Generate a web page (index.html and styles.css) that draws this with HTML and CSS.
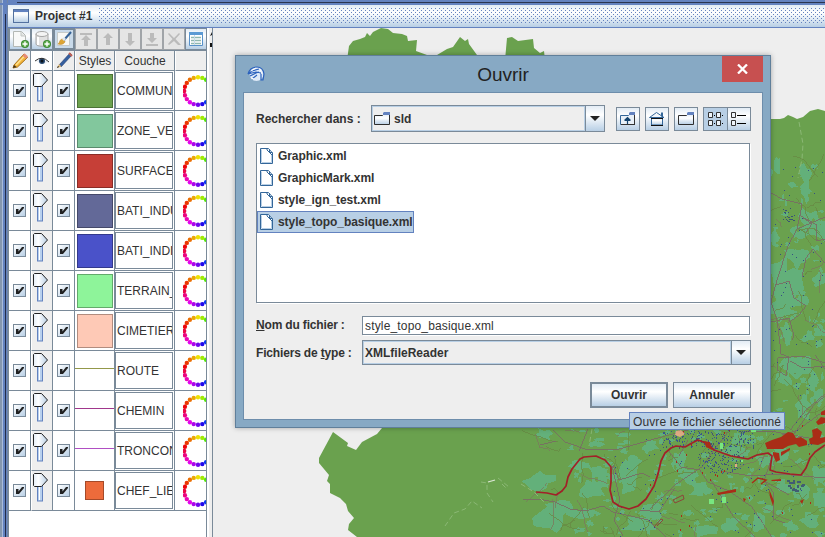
FILE: index.html
```html
<!DOCTYPE html>
<html lang="fr">
<head>
<meta charset="utf-8">
<title>Project #1</title>
<link rel="stylesheet" href="styles.css">
</head>
<body>
<svg class="defs" width="0" height="0" aria-hidden="true">
  <defs>
    <linearGradient id="steel" x1="0" y1="0" x2="0" y2="1"><stop offset="0" stop-color="#e3ecf5"/><stop offset=".35" stop-color="#fff"/><stop offset="1" stop-color="#b8cfe5"/></linearGradient>
    <linearGradient id="knobfill" x1="0" y1="0" x2="1" y2="0"><stop offset="0" stop-color="#e4edf6"/><stop offset=".35" stop-color="#fff"/><stop offset="1" stop-color="#b8cfe5"/></linearGradient>
    <pattern id="bumps" width="4" height="4" patternUnits="userSpaceOnUse"><path fill="#6382bf" d="M0 0h1v1H0zM2 2h1v1H2z"/></pattern>
    <symbol id="folder" viewBox="0 0 16 16">
      <path d="M.5 13.500v-9h8l1-1h6v10z" fill="url(#steel)" stroke="#2e2e2e"/>
      <path d="M9 2l1-1h6v3H9z" fill="#6382bf"/>
    </symbol>
    <symbol id="file" viewBox="0 0 14 16">
      <path d="M.5.5h8l4 4.500v10.500h-12z" fill="#fff" stroke="#336699"/>
      <path d="M1.500 14.500V1.500M2 14.500h9.500V6" fill="none" stroke="#b8cfe5"/>
      <path d="M7 1v1l5 5M9.500 1.500V4.500h3" fill="none" stroke="#336699"/>
    </symbol>
    <symbol id="plus" viewBox="0 0 8 8"><circle cx="4" cy="4" r="4" fill="#3c8a32"/><circle cx="4" cy="4" r="3" fill="#5fae4c"/><path d="M3.300 1.500h1.400v1.800h1.800v1.400H4.700v1.800H3.300V4.700H1.500V3.300h1.800z" fill="#fff"/></symbol>
  </defs>
</svg>
<div class="frame">
  <header class="titlebar">
    <svg class="winicon" width="16" height="14" viewBox="0 0 16 14"><rect x=".5" y=".5" width="15" height="13" fill="url(#steel)" stroke="#53719f"/><path d="M1 1h14v2H1z" fill="#6382bf"/></svg>
    <span>Project #1</span>
    <svg class="bumps" height="16"><rect width="100%" height="16" fill="url(#bumps)"/></svg>
  </header>
  <main class="work">
    <section class="layers">
      <div class="toolbar">
        <button class="tool"><svg width="20" height="20"><path d="M3.500 2.500h8l4 4v11h-12z" fill="#f8f9f8" stroke="#b3b8b5"/><path d="M11 3v4h4" fill="#e1e4e2" stroke="#c3c7c5"/><use href="#plus" x="11" y="11" width="8" height="8"/></svg></button>
        <button class="tool"><svg width="20" height="20"><path d="M4 5v10c0 3 12 3 12 0V5z" fill="#e1e1e1" stroke="#a6a6a6"/><ellipse cx="10" cy="5" rx="6" ry="2.500" fill="#f4f4f4" stroke="#a6a6a6"/><path d="M6 8v8" stroke="#fff" stroke-width="2"/><use href="#plus" x="11" y="11" width="8" height="8"/></svg></button>
        <button class="tool on"><svg width="20" height="20"><path d="M3.500 3.500h12v13h-12z" fill="#f8f8f5" stroke="#c7cbc9"/><path d="M4 15c2-1 1-5 5-5l2 2c0 3-4 4-7 3z" fill="#dda534" stroke="#b57d20" stroke-width=".5"/><path d="M10 11l7-8" stroke="#356296" stroke-width="2"/><path d="M9 11l2-2" stroke="#dfe7ed" stroke-width="3"/></svg></button>
        <button class="tool off"><svg width="20" height="20"><path d="M4 4h12v2H4zM10 6l5 5h-3v6H8v-6H5z"/></svg></button>
        <button class="tool off"><svg width="20" height="20"><path d="M10 4l5 5h-3v7H8V9H5z"/></svg></button>
        <button class="tool off"><svg width="20" height="20"><path d="M10 17l-5-5h3V4h4v8h3z"/></svg></button>
        <button class="tool off"><svg width="20" height="20"><path d="M10 14L5 9h3V4h4v5h3zM4 15h12v2H4z"/></svg></button>
        <button class="tool off"><svg width="20" height="20"><path d="M5 4l5 5 5-5 1 1-4.500 5L17 16h-3l-4-4-5 4-1-1 4.500-5L4 5z"/></svg></button>
        <button class="tool"><svg width="20" height="20"><path d="M3.500 3.500h13v13h-13z" fill="#fff" stroke="#5791c9"/><path d="M3 3h14v3H3z" fill="#5c9ad4"/><path d="M5 8.500h10M5 11.500h10M5 14.500h10" stroke="#90b7b0" stroke-width="1.500"/><path d="M8.500 6v10" stroke="#c5d9e9"/></svg></button>
      </div>
      <div class="row head">
        <div><svg width="21" height="19"><path d="M4 14L14 3l3.500 3.500L7.500 16 3 17z" fill="#f3b43a" stroke="#a87119"/><path d="M6 14l9-9.500" stroke="#ffe18c" stroke-width="1.500"/><path d="M13.500 3.500l3.500 3" stroke="#e68c75" stroke-width="3"/><path d="M3 17l1-3 2.500 2z" fill="#3c3122"/></svg></div>
        <div class="eye"><svg width="16" height="14"><path d="M2 7q6-5 12 1-6 4-11-.5" fill="#e9eef4"/><circle cx="8" cy="7" r="3" fill="#26476d"/><circle cx="8" cy="7" r="1.500" fill="#0b1118"/><path d="M1 7q7-6 14 1" fill="none" stroke="#333"/></svg></div>
        <div><svg width="21" height="19"><path d="M5 14L16 2l2 2L7 16z" fill="#3560a0" stroke="#263b6c" stroke-width=".6"/><path d="M15 2l3 3" stroke="#c06054" stroke-width="2"/><path d="M3 17l2-4 2.500 2.500z" fill="#ddba7b"/><path d="M3 17l1-2 1 1z"/></svg></div>
        <div>Styles</div><div>Couche</div><div></div>
      </div>
      <div id="rows"></div>
    </section>
    <div class="divider"><svg width="5" height="20"><path d="M5 4v3l-2 1zM3 15h2v4H3z" fill="#111"/></svg></div>
    <section class="mapview"><svg id="map" width="612" height="509" viewBox="213 28 612 509"></svg></section>
  </main>
</div>

<div class="dialog">
  <div class="dialog-title">
    <svg class="logo" width="18" height="16"><ellipse cx="9.500" cy="8" rx="7" ry="7" fill="#dfeaf8"/><path d="M1 8Q3 1 10 1q6 0 7 7l-1 6h-2V7L9 6 1 8l4-3 7-2M3 10l6-3 3-1M5 13l5-4" fill="none" stroke="#2c62bd" stroke-width="1.200"/><path d="M4 5l5-3M13 3l2 5M4 12l3 1" stroke="#fff"/></svg>
    <span>Ouvrir</span>
    <button class="close"><svg width="11" height="10"><path d="M1 .5l9 9M10 .5l-9 9" stroke="#fff" stroke-width="2.300"/></svg></button>
  </div>
  <div class="pane">
    <div class="lookin">
      <label>Rechercher dans :</label>
      <div class="combo"><div class="value"><svg width="16" height="16"><use href="#folder" width="16" height="16"/></svg>sld</div><button><svg width="10" height="5"><path d="M0 0h10L5 5z" fill="#222"/></svg></button></div>
      <div class="nav">
        <button><svg width="16" height="16"><path d="M.5 13.500v-9h8l1-1h5v10z" fill="#e8f0f8" stroke="#336699"/><path d="M9 2l1-1h5v3H9z" fill="#6382bf"/><path d="M1 13.500h14M14.500 4v10" stroke="#333"/><path d="M7.500 13V7M4.500 9.500L7.500 6.500l3 3M5 9.500h5" fill="none" stroke="#14446f" stroke-width="1.200"/></svg></button>
        <button><svg width="16" height="16"><path d="M2.500 7v7h11V7" fill="url(#steel)" stroke="#336699"/><path d="M.5 6.500l7-5 7.500 5z" fill="#f2f6fa" stroke="#336699"/><path d="M12 1.500h2v4h-2z" fill="#336699"/><path d="M2 7.500h12M2 14.500h12" stroke="#111"/></svg></button>
        <button><svg width="16" height="16"><use href="#folder" width="16" height="16"/></svg></button>
        <button class="pressed"><svg width="16" height="16"><path d="M.5 1.500h4v5h-4zM8.500 1.500h4v5h-4zM.5 9.500h4v5h-4zM8.500 9.500h4v5h-4z" fill="#eef4fa" stroke="#333"/><path d="M6 4h1v1H6zM14 4h1v1h-1zM6 12h1v1H6zM14 12h1v1h-1z"/></svg></button>
        <button class="joined"><svg width="16" height="16"><path d="M.5 1.500h4v5h-4zM.5 9.500h4v5h-4z" fill="#eef4fa" stroke="#333"/><path d="M6 4h9v1H6zM6 12h9v1H6z"/></svg></button>
      </div>
    </div>
    <ul class="files">
      <li><svg width="14" height="16"><use href="#file" width="14" height="16"/></svg>Graphic.xml</li>
      <li><svg width="14" height="16"><use href="#file" width="14" height="16"/></svg>GraphicMark.xml</li>
      <li><svg width="14" height="16"><use href="#file" width="14" height="16"/></svg>style_ign_test.xml</li>
      <li class="selected"><svg width="14" height="16"><use href="#file" width="14" height="16"/></svg>style_topo_basique.xml</li>
    </ul>
    <div class="form">
      <label><u>N</u>om du fichier :</label><div class="field">style_topo_basique.xml</div>
      <label>Fichiers de <u>t</u>ype :</label>
      <div class="combo"><div class="value">XMLfileReader</div><button><svg width="10" height="5"><path d="M0 0h10L5 5z" fill="#222"/></svg></button></div>
    </div>
    <div class="actions"><button class="default">Ouvrir</button><button>Annuler</button></div>
  </div>
</div>
<div class="tooltip">Ouvre le fichier sélectionné</div>
<script src="app.js"></script>
</body>
</html>
```
FILE: styles.css
```css
* { box-sizing: border-box; }
body { margin: 0; width: 825px; height: 537px; overflow: hidden; position: relative; background: #eee; color: #333; font: 12px "Liberation Sans", Arial, sans-serif; }
svg { display: block; flex: none; }
button { padding: 0; margin: 0; border: 1px solid #7a8a99; border-radius: 0; color: #333; font: bold 12px "Liberation Sans", Arial, sans-serif; background: linear-gradient(#e3ecf5, #fff 35%, #b8cfe5); display: flex; align-items: center; justify-content: center; }
.defs { position: absolute; }
.frame { height: 537px; padding: 5px 0 0 8px; background: linear-gradient(#6382bf, #6382bf) 0 3px / 100% 2px no-repeat, linear-gradient(#2a3550, #2a3550) 17px 2px / 100% 1px no-repeat, linear-gradient(#222c48, #222c48) 5px 14px / 1px 100% no-repeat, linear-gradient(90deg, #8496ae 0 2px, #a9bcdb 2px 3px, #6382bf 3px 7px, #7186a5 7px 8px, #6382bf 8px); }
.titlebar { height: 23px; display: flex; align-items: center; border-bottom: 1px solid #6382bf; background: linear-gradient(#e0eaf4, #fff 35%, #b8cfe5); font-weight: bold; }
.winicon { margin: 0 6px 0 5px; }
.titlebar span { width: 64px; white-space: nowrap; }
.bumps { flex: 1; min-width: 0; shape-rendering: crispEdges; }
.work { height: 509px; display: flex; }
.layers { width: 199px; height: 509px; background: #fff; border-left: 1px solid #7a8a99; border-right: 1px solid #7a8a99; overflow: hidden; }
.toolbar { display: flex; height: 22px; background: #eee; }
.tool { width: 22px; height: 22px; flex: none; }
.tool.on { background: #c9daea; border-width: 2px; }
.tool.off { background: #e5e5e5; border-color: #a0a4a8; }
.tool.off path { fill: #bbb; }
.row { display: grid; grid-template-columns: 22px 22px 22px 40px 60px 31px; height: 40px; }
.row > div { border-right: 1px solid #7a8a99; border-bottom: 1px solid #7a8a99; display: flex; align-items: center; justify-content: center; min-width: 0; overflow: hidden; }
.row > div:last-child { border-right: 0; }
.head { height: 21px; border-top: 1px solid #7a8a99; }
.head > div { background: #eee; border-left: 1px solid #fff; font-size: 12px; white-space: nowrap; }
.head .eye { background: #fff; }
.check { width: 13px; height: 13px; border: 1px solid #7a8a99; background: linear-gradient(135deg, #fff, #b8cfe5); }
.row .slide { background: #eee; border-left: 1px solid #fff; align-items: flex-start; justify-content: flex-start; padding-top: 1px; }
.row .paint { justify-content: center; }
.swatch { width: 36px; height: 34px; border: 1px solid rgba(0, 0, 0, .3); }
.swatch.point { width: 19px; height: 19px; }
.stroke { width: 100%; height: 1px; margin-top: -4px; }
.row .name { justify-content: flex-start; }
.name span { width: 58px; height: 37px; border: 1px solid #7a8a99; padding-left: 1px; line-height: 36px; white-space: nowrap; overflow: hidden; }
.row .ring { justify-content: flex-start; padding-left: 8px; }
.divider { width: 6px; background: linear-gradient(90deg, #fff 2px, #eee 2px 5px, #7a8a99 5px); }
.mapview { width: 612px; height: 509px; overflow: hidden; background: #eee; }

.dialog { position: absolute; left: 235px; top: 55px; width: 536px; height: 373px; border: 1px solid #607f9a; background: #87a9c4; padding: 0 7px 7px; box-shadow: 0 0 5px rgba(0, 0, 0, .3); }
.dialog-title { height: 36px; display: grid; grid-template-columns: 41px 1fr 41px; align-items: start; }
.logo { margin: 10px 0 0 4px; }
.dialog-title span { font-size: 19px; line-height: 37px; text-align: center; color: #222; }
.close { height: 26px; width: 41px; background: #c75050; border: 0; }
.pane { height: 328px; background: #eee; border: 1px solid #6d8dab; padding: 12px 11px 0 12px; }
label { font-weight: bold; white-space: nowrap; }
.lookin { display: flex; align-items: center; height: 27px; }
.lookin label { width: 115px; }
.combo { display: flex; border: 1px solid #7a8a99; font-weight: bold; }
.combo .value { flex: 1; border: 1px solid #b8cfe5; display: flex; align-items: center; gap: 4px; padding-left: 1px; }
.combo button { width: 19px; border-width: 0 0 0 1px; }
.lookin .combo { width: 234px; height: 27px; }
.nav { display: flex; padding-left: 11px; }
.nav button { width: 24px; height: 24px; margin-right: 5px; }
.nav .pressed { width: 25px; margin-right: 0; background: #b8cfe5; }
.nav .joined { width: 24px; margin: 0 0 0 -1px; }
.files { list-style: none; margin: 11px 0 0; padding: 1px 0 0; width: 494px; height: 160px; background: #fff; border: 1px solid #7a8a99; box-shadow: 1px 1px #fff; font-weight: bold; letter-spacing: -.07px; }
.files li { display: flex; align-items: center; gap: 4px; width: max-content; height: 22px; padding-left: 3px; line-height: 21px; }
.files .selected { background: #b8cfe5; outline: 1px solid #6382bf; outline-offset: -1px; padding-right: 1px; }
.form { display: grid; grid-template-columns: 106px 389px; grid-template-rows: 20px 25px; row-gap: 5px; margin-top: 12px; align-items: center; }
.form label { letter-spacing: -.17px; }
.field { width: 388px; height: 19px; background: #fff; border: 1px solid #7a8a99; box-shadow: 1px 1px #fff; padding-left: 2px; line-height: 18px; letter-spacing: .16px; }
.form .combo { height: 25px; }
.actions { display: flex; justify-content: flex-end; gap: 5px; margin-top: 17px; }
.actions button { width: 78px; height: 26px; }
.actions .default { border-width: 2px; }
.tooltip { position: absolute; left: 629px; top: 412px; width: 156px; height: 18px; border: 1px solid #6382bf; background: #b8cfe5; line-height: 18px; padding-left: 3px; white-space: nowrap; letter-spacing: .12px; }
```
FILE: app.js
```js
const layers = [
  ['COMMUNE', '#6ca24e'], ['ZONE_VEGETATION', '#82c79d'], ['SURFACE_EAU', '#c63f37'],
  ['BATI_INDUSTRIEL', '#636998'], ['BATI_INDIFFERENCIE', '#4a52c9'], ['TERRAIN_SPORT', '#8ef49a'],
  ['CIMETIERE', '#fec9b6'], ['ROUTE', '#93984a', 'line'], ['CHEMIN', '#a0378c', 'line'],
  ['TRONCON_EAU', '#b04fc3', 'line'], ['CHEF_LIEU', '#ed6b3b', 'point']
];
const check = '<div><span class="check"><svg width="11" height="11"><path d="M2 4h2.500v2.500L8 2h2v1L5 9H2z" fill="#222"/></svg></span></div>';
const slider = '<div class="slide"><svg width="19" height="36"><rect x="5.500" y="10" width="5" height="19" fill="#b8d0ee" stroke="#6382bf"/><path d="M7.500 14v14" stroke="#fff"/><path d="M1.500 2.500l1-1h7l6 6.500-6 6.500h-7l-1-1z" fill="url(#knobfill)" stroke="#222"/></svg></div>';
let dots = '';
for (let i = 0; i < 20; i++) {
  const a = i * Math.PI / 10;
  const hue = i < 10 ? 58 + i * 21 : 268 + (i - 10) * 15;
  dots += `<circle cx="${(15 + 13.8 * Math.sin(a)).toFixed(1)}" cy="${(16 - 13.8 * Math.cos(a)).toFixed(1)}" r="2.200" fill="hsl(${hue % 360} 96% 47%)"/>`;
}
const ring = `<div class="ring"><svg width="32" height="32">${dots}</svg></div>`;
document.getElementById('rows').innerHTML = layers.map(([name, color, kind]) => {
  const cls = kind === 'line' ? 'stroke' : 'swatch ' + (kind || '');
  return `<div class="row">${check}${slider}${check}<div class="paint"><i class="${cls}" style="background:${color}"></i></div><div class="name"><span>${name}</span></div>${ring}</div>`;
}).join('');

// Map: commune outline, vegetation, roads, buildings and water, in drawing order.
let seed = 41;
const rnd = () => (seed = (seed * 16807) % 2147483647) / 2147483647;
const between = (a, b) => a + rnd() * (b - a);
const poly = (pts, attrs) => `<polygon points="${pts}" ${attrs}/>`;
const line = (pts, stroke, w = 1) => `<polyline points="${pts}" fill="none" stroke="${stroke}" stroke-width="${w}"/>`;
function blob(x, y, rx, ry) {
  const p = [];
  for (let i = 0; i < 12; i++) {
    const a = i * Math.PI / 6, k = between(.45, 1.15);
    p.push((x + rx * k * Math.cos(a)).toFixed(1) + ',' + (y + ry * k * Math.sin(a)).toFixed(1));
  }
  return p.join(' ');
}
let m = '';
const green = 'fill="#6aa14e"', teal = 'fill="#63b07a"', red = 'fill="#a92d17"';
m += poly('347,60 349,46 353,41 360,39 365,37 367,33 370,36 373,32 381,28 388,29 393,33 402,34 407,36 408,41 417,40 416,51 427,55 427,60', green);
m += poly('434,60 437,55 447,49 453,47 460,37 465,41 468,39 469,44 477,55 477,60', green);
m += poly('505,60 507,38 512,37 518,41 533,39 534,48 540,53 544,51 545,60', green);
m += poly('760,119 780,119 784,118 788,115 793,117 797,119 803,117 810,111 818,109 825,111 825,537 357,537 348,530 349,524 354,518 348,511 346,504 340,498 330,493 330,484 327,481 329,475 319,463 319,458 326,445 333,432 348,443 347,446 356,450 362,442 377,434 382,428 400,400 760,400', green);

m += '<g shape-rendering="crispEdges">';
[[778,165,4,9],[771,172,4,5],[804,173,9,9],[806,192,6,11],[793,185,5,3],[815,167,4,4],[810,221,15,14],[803,231,16,8],[820,233,8,10],[775,238,5,9],[797,257,14,13],[780,277,15,27],[794,279,12,20],[780,308,17,13],[797,300,12,9],[820,279,8,10],[786,333,7,12],[820,332,6,8],[796,365,15,15],[784,378,11,8],[815,380,7,12],[808,337,7,6],[818,394,7,9],[803,405,8,13],
  [544,434,10,6],[578,465,14,5],[540,481,17,10],[548,518,18,18],[560,509,17,9],[592,489,15,14],[583,514,16,7],[600,476,8,12],[629,481,15,17],[631,461,13,8],[640,525,22,9],[650,512,17,9],[678,464,9,15],[690,476,12,10],[700,490,12,9],[736,451,15,8],[740,440,12,8],[764,461,11,9],[781,454,8,10],[785,488,10,8],[802,493,11,11],[819,475,9,13],[820,500,8,12],[810,520,10,9],[705,531,15,7],[731,525,10,8],[757,523,8,12],[769,508,7,5],[624,435,9,3],[595,444,10,4],[791,526,9,6],[651,446,10,6],[800,462,8,4]
].forEach(([x, y, a, b]) => { m += poly(blob(x, y, a, b), teal); });
for (let i = 0; i < 165; i++) m += poly(blob(between(570, 825), between(430, 537), between(1, 6), between(1, 4)), teal);
for (let i = 0; i < 70; i++) m += poly(blob(between(771, 825), between(190, 430), between(1, 5), between(1, 5)), teal);
for (let i = 0; i < 75; i++) m += poly(blob(between(i % 2 ? 590 : 771, 825), i % 2 ? between(430, 537) : between(170, 430), 2, 3), green);

// Minor tracks
for (let i = 0; i < 105; i++) {
  let x = between(i % 3 ? 545 : 771, 825), y = i % 3 ? between(430, 537) : between(175, 430);
  const p = [], dx = between(-7, 7), dy = between(-7, 7);
  for (let j = 0; j < 5; j++) { p.push(x.toFixed(1) + ',' + y.toFixed(1)); x += dx + between(-3, 3); y += dy + between(-3, 3); }
  m += line(p.join(' '), i % 4 ? '#688b45' : '#7a7a5e', .8);
}
['771,193 782,199 802,204 800,215 797,229 788,246 777,280 771,302 777,320 780,344 781,354 789,357 786,376 777,370 778,358 803,356 825,363','771,322 789,318 794,336 792,340','776,285 789,281 794,298 806,306 799,315 788,323','797,229 825,217','799,215 817,225 816,241 825,239','803,218 812,224 806,232','802,277 806,258 813,249 825,263','815,355 825,369','790,430 806,410 825,394','790,440 814,405 825,396','790,361 803,368 825,366',
 '553,430 565,442 588,450 619,449 654,439 688,430','588,429 579,451','523,499 538,499 555,502 570,509 585,511 603,506 613,512 648,520 666,537','613,465 619,480 642,473 650,477','612,466 620,500 614,520 623,536','650,509 675,485 703,466','668,450 681,467 700,470 708,482 729,491 752,507 772,537','640,510 659,512 675,488','721,471 751,476 780,474 825,478','771,460 764,481 774,493 773,519 785,523','764,481 775,487 789,495','745,432 770,431 825,441','711,480 733,516 755,537','701,468 716,447 728,432','782,435 798,430 825,410','540,445 556,441','688,440 679,456'
].forEach(p => { m += line(p, '#796d64', .9); });
m += '</g>';
['799,122 803,144 802,159 798,178','445,526 454,513 465,509 472,501 482,508','481,482 487,483 487,493 493,502','498,478 509,487','502,484 507,489','521,484 534,492 546,504','592,429 589,446'].forEach(p => { m += `<polyline points="${p}" fill="none" stroke="#8bb875" stroke-dasharray="5 3"/>`; });
m += line('488,482 495,480', '#dde8d6', 1.2);

// Buildings
const building = (x, y, w, h, c) => `<rect x="${Math.round(x)}" y="${Math.round(y)}" width="${w}" height="${h}" fill="${c}"/>`;
for (let i = 0; i < 190; i++) m += building(between(662, 754), between(430, 447), 1, rnd() > .7 ? 2 : 1, i % 3 ? '#3a5590' : '#45566c');
for (let i = 0; i < 145; i++) { const a = between(0, 6.3), r = Math.sqrt(rnd()); m += building(721 + 24 * r * Math.cos(a), 460 + 14 * r * Math.sin(a), 1, 1, i % 3 ? '#3a568c' : '#40536d'); }
for (let i = 0; i < 95; i++) m += building(between(610, 825), between(430, 537), 1, 1, '#324a91');
for (let i = 0; i < 70; i++) m += building(between(772, 825), between(165, 430), 1, 1, '#344f83');
for (let i = 0; i < 23; i++) m += building(between(781, 793), between(208, 222), rnd() > .6 ? 2 : 1, 1, '#385374');
for (let i = 0; i < 18; i++) m += building(between(787, 803), between(479, 490), between(1, 4).toFixed(0), 2, '#405c73');
for (let i = 0; i < 26; i++) m += building(between(630, 825), between(420, 530), 1, 2, '#a92d17');

// River and water bodies
m += '<polyline points="536,492 547,493 556,495 562,491 566,486 568,477 572,469 580,459 584,457 596,456 605,460 611,467 611,482 610,490 613,502 619,506 629,509 638,506 646,499 654,486 658,474 661,461 665,453 671,448 676,446 685,447 692,443 698,440 706,443 714,450 731,456 748,459 757,455 768,453 772,456 770,470 776,472 790,474 801,475 806,468 810,458 815,452 825,445" fill="none" stroke="#a22028" stroke-width="1.700" stroke-linejoin="round"/>';
['765,443 772,440 781,437 788,432 793,433 796,438 801,437 807,441 807,445 799,447 796,444 788,446 783,449 767,449', '812,430 817,428 822,432 820,438 825,437 825,442 818,445 810,444 809,439 813,437', '816,422 821,417 825,418 825,423 818,425', '821,412 825,410 825,415 821,415','773,452 779,453 780,460 776,462 773,455','781,452 790,448 790,450 781,456','717,493 736,489 736,492 718,495','771,480 781,479 781,481 772,481','769,489 774,501 773,506 770,497','704,441 710,442 712,450 706,447','743,498 746,499 744,502','800,501 804,499 802,504'].forEach(p => { m += poly(p, red); });
m += line('752,483 758,478 766,480 761,484', '#a92d17', 1.5);
m += line('673,500 683,495 684,499 675,503 673,500', '#8c463a');
m += line('654,527 661,519 663,520 657,526', '#8c463a');
m += building(709, 499, 5, 5, '#78e77f') + building(722, 497, 4, 6, '#78e77f') + building(720, 443, 3, 6, '#78e77f') + building(751, 430, 5, 2, '#78e77f') + building(741, 460, 2, 2, '#78e77f');
m += poly('676,431 681,430 685,434 680,437 675,435', 'fill="#dfaa83"') + building(735, 464, 2, 3, '#dfaa83');
document.getElementById('map').innerHTML = m;
```
